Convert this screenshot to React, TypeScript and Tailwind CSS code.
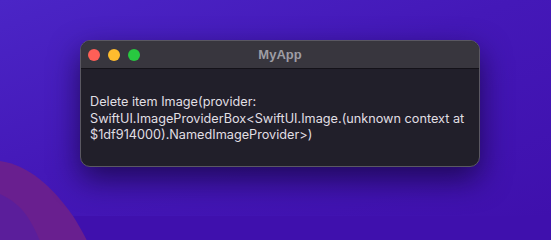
export default function App() {
  return (
    <div className="relative w-full h-screen min-h-[216px] overflow-hidden bg-[linear-gradient(160deg,#4b25c6_0%,#4418b8_45%,#3f10ad_100%)] bg-[length:100%_216px] bg-no-repeat bg-[#3f10ad]">
      <svg className="absolute left-0 top-0" width="551" height="300" viewBox="0 0 551 300">
        <path d="M0 161 C 28 165, 52 186, 73 216 C 82 230, 90 246, 97 262 L 110 300 L 0 300 Z" fill="#691f8f" />
        <path d="M0 194 C 11 199, 20 206, 27 216 C 33 225, 38 236, 42 246 L 50 300 L 0 300 Z" fill="#5b1e9b" />
      </svg>
      <div className="absolute left-[80px] top-[40px] w-[400px] h-[127px] rounded-[10px] bg-[#211f2a] border border-[#5a5862] shadow-[0_12px_30px_rgba(20,5,60,0.75)] overflow-hidden flex flex-col">
        <div className="relative h-[28px] shrink-0 bg-[#38363e] border-b border-[#141219] flex items-center">
          <div className="flex items-center gap-[8px] pl-[7px]">
            <span className="w-[12px] h-[12px] rounded-full bg-[#fe5f57]" />
            <span className="w-[12px] h-[12px] rounded-full bg-[#febc2e]" />
            <span className="w-[12px] h-[12px] rounded-full bg-[#28c840]" />
          </div>
          <div className="absolute inset-0 flex items-center justify-center text-[13px] font-bold text-[#9e9da4] font-['Liberation_Sans',sans-serif]">MyApp</div>
        </div>
        <div className="flex-1 flex items-center px-[9px] pt-[3px]">
          <p className="text-[12.7px] leading-[16.5px] text-[#e0dfe4] whitespace-nowrap font-['Inter',sans-serif]">
            Delete item Image(provider:
            <br />
            SwiftUI.ImageProviderBox&lt;SwiftUI.Image.(unknown context at
            <br />
            $1df914000).NamedImageProvider&gt;)
          </p>
        </div>
      </div>
    </div>
  );
}
